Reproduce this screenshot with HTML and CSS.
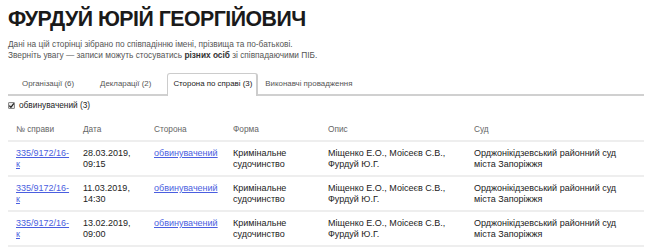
FILE: index.html
```html
<!DOCTYPE html>
<html lang="uk">
<head>
<meta charset="utf-8">
<link rel="stylesheet" href="styles.css">
</head>
<body>
<h1 class="title">ФУРДУЙ ЮРІЙ ГЕОРГІЙОВИЧ</h1>
<p class="note">Дані на цій сторінці зібрано по співпадінню імені, прізвища та по-батькові.<br>Зверніть увагу — записи можуть стосуватись <b>різних осіб</b> зі співпадаючими ПІБ.</p>
<ul class="tabs">
  <li class="tab">Організації (6)</li>
  <li class="tab">Декларації (2)</li>
  <li class="tab active">Сторона по справі (3)</li>
  <li class="tab">Виконавчі провадження</li>
</ul>
<label class="filter"><input class="check" type="checkbox" checked> обвинувачений (3)</label>
<table class="cases">
  <thead>
    <tr><th class="c-num">№ справи</th><th class="c-date">Дата</th><th class="c-side">Сторона</th><th class="c-form">Форма</th><th class="c-desc">Опис</th><th class="c-court">Суд</th></tr>
  </thead>
  <tbody>
    <tr><td><a href="#">335/9172/16-к</a></td><td>28.03.2019, 09:15</td><td><a href="#">обвинувачений</a></td><td>Кримінальне судочинство</td><td>Міщенко Е.О., Моісеєв С.В., Фурдуй Ю.Г.</td><td class="court">Орджонікідзевський районний суд міста Запоріжжя</td></tr>
    <tr><td><a href="#">335/9172/16-к</a></td><td>11.03.2019, 14:30</td><td><a href="#">обвинувачений</a></td><td>Кримінальне судочинство</td><td>Міщенко Е.О., Моісеєв С.В., Фурдуй Ю.Г.</td><td class="court">Орджонікідзевський районний суд міста Запоріжжя</td></tr>
    <tr><td><a href="#">335/9172/16-к</a></td><td>13.02.2019, 09:00</td><td><a href="#">обвинувачений</a></td><td>Кримінальне судочинство</td><td>Міщенко Е.О., Моісеєв С.В., Фурдуй Ю.Г.</td><td class="court">Орджонікідзевський районний суд міста Запоріжжя</td></tr>
  </tbody>
</table>
</body>
</html>
```
FILE: styles.css
```css
html, body { margin: 0; padding: 0; background: #fff; }
body {
  padding: 0 8px;
  font-family: "Liberation Sans", Arial, sans-serif;
  color: #222;
}
.title {
  margin: 6px 0 0;
  font-size: 21.3px;
  line-height: 26px;
  letter-spacing: -0.5px;
  font-weight: bold;
  color: #1a1a1a;
}
.note {
  margin: 7px 0 0;
  font-size: 8.3px;
  line-height: 11px;
  color: #555;
}
.note b { color: #333; }
.tabs {
  list-style: none;
  margin: 12px 0 0;
  padding: 0 0 0 6px;
  display: flex;
  gap: 10px;
  border-bottom: 2px solid #d0d0d0;
}
.tab {
  font-size: 7.9px;
  line-height: 11px;
  color: #555;
  padding: 4px 7px 5px;
  border: 1px solid transparent;
  border-bottom: none;
  margin-bottom: -2px;
}
.tab.active {
  color: #222;
  background: #fff;
  border-color: #ccc;
  border-width: 1px 2px 0 1px;
  border-radius: 3px 3px 0 0;
  padding: 4px 4px 7px 5px;
  margin-left: -2px;
  margin-right: -11px;
}
.filter {
  display: flex;
  align-items: center;
  gap: 4px;
  margin-top: 4px;
  font-size: 8.3px;
  line-height: 11px;
  color: #222;
}
.check {
  appearance: none;
  -webkit-appearance: none;
  margin: 0;
  width: 7px;
  height: 7px;
  border: 1px solid #8a8a8a;
  border-radius: 1px;
  background: #e6e6e6 url("data:image/svg+xml,%3Csvg xmlns='http://www.w3.org/2000/svg' viewBox='0 0 7 7'%3E%3Cpath d='M1.2 3.6 L2.9 5.3 L5.9 1.4' fill='none' stroke='%23222' stroke-width='1.3'/%3E%3C/svg%3E") center / 7px 7px no-repeat;
  box-sizing: border-box;
}
.cases {
  margin-top: 5px;
  width: 636px;
  table-layout: fixed;
  border-collapse: collapse;
  font-size: 9px;
}
.cases th, .cases td {
  box-sizing: border-box;
  text-align: left;
  padding-left: 8px;
  padding-right: 4px;
}
.cases th {
  font-weight: normal;
  font-size: 8.3px;
  line-height: 11px;
  color: #666;
  padding-top: 8px;
  padding-bottom: 5px;
  border-bottom: 2px solid #eee;
}
.cases td {
  vertical-align: top;
  padding-top: 6px;
  padding-bottom: 5px;
  line-height: 11px;
  color: #222;
  border-bottom: 2px solid #eee;
}
.cases td.court { padding-right: 16px; }
.cases a { color: #4a5ee0; text-decoration: underline; }
.c-num { width: 67px; }
.c-date { width: 71px; }
.c-side { width: 79px; }
.c-form { width: 95px; }
.c-desc { width: 146px; }
```
